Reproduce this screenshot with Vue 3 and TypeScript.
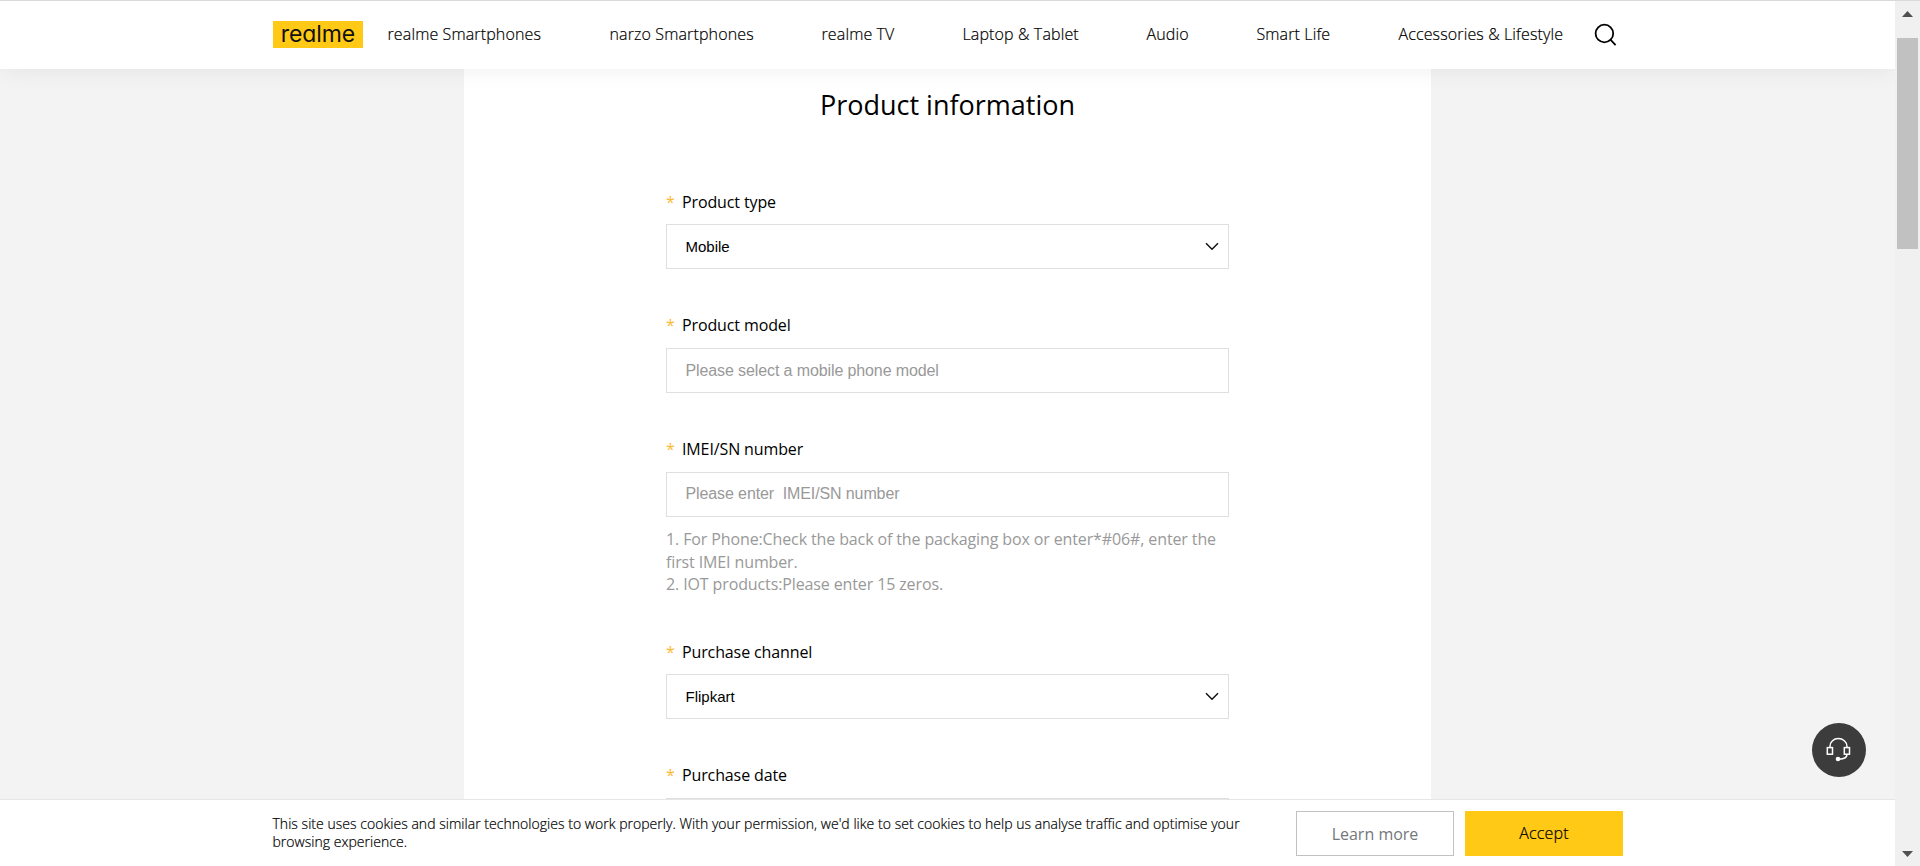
<script setup lang="ts">
interface NavItem {
  label: string
  width: number
}

interface Field {
  id: string
  label: string
  kind: 'select' | 'input'
  value?: string
  placeholder?: string
  hints?: string[]
}

const navItems: NavItem[] = [
  { label: 'realme Smartphones', width: 154 },
  { label: 'narzo Smartphones', width: 144 },
  { label: 'realme TV', width: 73 },
  { label: 'Laptop & Tablet', width: 116 },
  { label: 'Audio', width: 42 },
  { label: 'Smart Life', width: 74 },
  { label: 'Accessories & Lifestyle', width: 165 },
]

const fields: Field[] = [
  { id: 'type', label: 'Product type', kind: 'select', value: 'Mobile' },
  { id: 'model', label: 'Product model', kind: 'input', placeholder: 'Please select a mobile phone model' },
  {
    id: 'imei',
    label: 'IMEI/SN number',
    kind: 'input',
    placeholder: 'Please enter  IMEI/SN number',
    hints: [
      '1. For Phone:Check the back of the packaging box or enter*#06#, enter the first IMEI number.',
      '2. IOT products:Please enter 15 zeros.',
    ],
  },
  { id: 'channel', label: 'Purchase channel', kind: 'select', value: 'Flipkart' },
  { id: 'date', label: 'Purchase date', kind: 'input' },
]
</script>

<template>
  <div class="screen">
    <div class="viewport">
      <header class="header">
        <div class="logo"><span class="wordmark">realme</span></div>
        <nav class="nav">
          <a v-for="item in navItems" :key="item.label" class="nav-item" :style="{ width: item.width + 'px' }">{{ item.label }}</a>
        </nav>
        <svg class="search" viewBox="0 0 24 24" fill="none" stroke="#000" stroke-width="1.8">
          <circle cx="10.4" cy="10.5" r="8.8" />
          <path d="M16.2 16.4L21.6 22.1" />
        </svg>
      </header>

      <main class="page">
        <section class="card">
          <h1 class="title">Product information</h1>
          <form class="form">
            <div v-for="field in fields" :key="field.id" class="field">
              <label class="label" :class="{ raised: field.kind === 'input' }"><span class="star">*</span>{{ field.label }}</label>
              <div class="control" :class="{ hinted: field.hints }">
                <span v-if="field.value" class="value">{{ field.value }}</span>
                <span v-else class="placeholder">{{ field.placeholder }}</span>
                <svg v-if="field.kind === 'select'" class="chevron" viewBox="0 0 14 9" fill="none" stroke="#111" stroke-width="1.5">
                  <path d="M1 1.3L7 7.2L13 1.3" />
                </svg>
              </div>
              <div v-if="field.hints" class="hints">
                <p v-for="hint in field.hints" :key="hint">{{ hint }}</p>
              </div>
            </div>
          </form>
        </section>
      </main>

      <div class="support">
        <svg viewBox="0 0 54 54" fill="none" stroke="#fff" stroke-width="1.5">
          <path d="M18 24V23.5C18 18.8 21.8 15.6 26.3 15.6S35 18.8 35 23.5V24" />
          <rect x="15.3" y="24.6" width="5.2" height="6.6" />
          <rect x="32.3" y="24.6" width="5.2" height="6.6" />
          <path d="M35 31.5C35 34.5 31.5 36 27 36.2" />
          <circle cx="26" cy="36" r="2.3" fill="#fff" stroke="none" />
        </svg>
      </div>

      <footer class="cookies">
        <p class="cookie-text">This site uses cookies and similar technologies to work properly. With your permission, we'd like to set cookies to help us analyse traffic and optimise your<br />browsing experience.</p>
        <button class="btn learn">Learn more</button>
        <button class="btn accept">Accept</button>
      </footer>
    </div>

    <aside class="scrollbar">
      <svg class="arrow" viewBox="0 0 11 6"><path d="M0 6L5.5 0L11 6Z" fill="#505050" /></svg>
      <div class="thumb"></div>
      <svg class="arrow down" viewBox="0 0 11 6"><path d="M0 0L5.5 6L11 0Z" fill="#505050" /></svg>
    </aside>
  </div>
</template>

<style>
body {
  margin: 0;
  overflow: hidden;
}
</style>

<style scoped>
.screen {
  box-sizing: border-box;
  display: flex;
  width: 1920px;
  height: 866px;
  border-top: 1px solid #d9d9d9;
  overflow: hidden;
  font-family: "Open Sans", sans-serif;
  color: #000;
}

.viewport {
  position: relative;
  display: flex;
  flex-direction: column;
  width: 1895px;
  height: 865px;
  overflow: hidden;
  background: #f3f3f3;
}

.header {
  z-index: 1;
  box-sizing: border-box;
  display: flex;
  flex: none;
  align-items: center;
  height: 68px;
  padding-left: 273px;
  background: #fff;
  box-shadow: 0 0 25px rgba(0, 0, 0, 0.07);
}

.logo {
  display: flex;
  align-items: center;
  justify-content: center;
  width: 90px;
  height: 27px;
  margin-bottom: 1px;
  background: #ffc915;
}

.wordmark {
  font-family: Inter, sans-serif;
  font-size: 23px;
  font-weight: 400;
  line-height: 25px;
  letter-spacing: -0.1px;
  font-feature-settings: "cv11";
  color: #111;
}

.nav {
  display: flex;
  gap: 68px;
  margin-bottom: 2px;
  margin-left: 24.5px;
}

.nav-item {
  font-size: 16px;
  font-weight: 300;
  line-height: 22px;
  letter-spacing: 0.13px;
  -webkit-text-stroke: 0.2px #000;
  white-space: nowrap;
  color: #000;
}

.search {
  width: 24px;
  height: 24px;
  margin-left: 30px;
}

.page {
  display: flex;
  flex: 1;
  justify-content: center;
  min-height: 0;
  padding-right: 1px;
  padding-left: 1px;
}

.card {
  width: 967px;
  background: #fff;
}

.title {
  margin: 17px 0 0;
  font-size: 27px;
  font-weight: 400;
  line-height: 37px;
  text-align: center;
}

.form {
  width: 563px;
  margin: 65px auto 0;
}

.field {
  margin-bottom: 43px;
}

.label {
  display: block;
  height: 36px;
  font-size: 16px;
  line-height: 28px;
  letter-spacing: -0.12px;
}

.raised {
  line-height: 26px;
}

.star {
  display: inline-block;
  width: 16px;
  color: #fdb933;
}

.control {
  box-sizing: border-box;
  display: flex;
  align-items: center;
  justify-content: space-between;
  height: 45px;
  padding: 0 9px 0 18.5px;
  border: 1px solid #dfdfdf;
  font-family: "Liberation Sans", Arial, sans-serif;
}

.hinted {
  padding-bottom: 2px;
}

.value {
  font-size: 15px;
}

.placeholder {
  font-size: 16px;
  letter-spacing: -0.11px;
  white-space: pre;
  color: #999;
}

.chevron {
  width: 14px;
  height: 9px;
}

.hints {
  box-sizing: border-box;
  height: 78px;
  padding-top: 11px;
  font-size: 16px;
  line-height: 22.5px;
  letter-spacing: -0.12px;
  color: #999;
}

.hints p {
  margin: 0;
}

.support {
  position: absolute;
  top: 722px;
  left: 1812px;
  width: 54px;
  height: 54px;
  border-radius: 50%;
  background: #3c3c3c;
}

.support svg {
  display: block;
}

.cookies {
  position: absolute;
  right: 0;
  bottom: 0;
  left: 0;
  box-sizing: border-box;
  display: flex;
  height: 67px;
  padding: 11px 0 0 272.5px;
  border-top: 1px solid #e6e6e6;
  background: #fff;
}

.cookie-text {
  width: 1023.5px;
  margin: 4px 0 0;
  font-size: 14px;
  font-weight: 300;
  line-height: 18px;
  letter-spacing: 0.033px;
  -webkit-text-stroke: 0.2px #000;
  white-space: nowrap;
}

.btn {
  box-sizing: border-box;
  width: 158px;
  height: 45px;
  margin: 0;
  padding: 0;
  border: 1px solid #bfc1c4;
  background: #fff;
  font-family: inherit;
  font-size: 16px;
  font-weight: 400;
  color: #75777c;
}

.accept {
  margin-left: 11px;
  padding-bottom: 2px;
  border-color: #ffc915;
  background: #ffc915;
  font-weight: 300;
  letter-spacing: 0.13px;
  -webkit-text-stroke: 0.2px #000;
  color: #000;
}

.scrollbar {
  display: flex;
  flex-direction: column;
  align-items: center;
  width: 25px;
  background: #f0f0f0;
}

.arrow {
  width: 11px;
  height: 6px;
  margin-top: 10px;
}

.thumb {
  width: 21px;
  height: 211px;
  margin-top: 21px;
  background: #c1c1c1;
}

.down {
  margin-top: auto;
  margin-bottom: 9px;
}
</style>
